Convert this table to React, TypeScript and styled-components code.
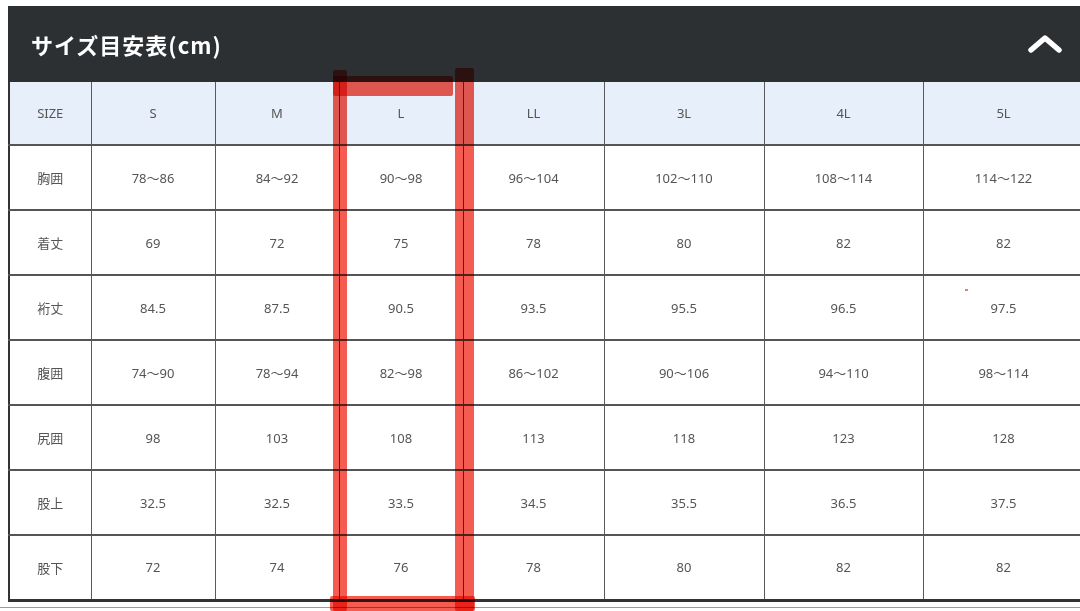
import React from "react";
import styled, { createGlobalStyle } from "styled-components";

const GlobalStyle = createGlobalStyle`
  html, body { margin: 0; padding: 0; background: #fff; }
  body { font-family: "Noto Sans", "Noto Sans CJK JP", sans-serif; }
  #root { width: 1080px; height: 611px; overflow: hidden; }
`;

const Page = styled.div`
  position: relative;
  width: 1080px;
  height: 611px;
  overflow: hidden;
  padding: 6px 0 0 8px;
  box-sizing: border-box;
  isolation: isolate;
`;

const Header = styled.div`
  height: 76px;
  width: 1090px;
  background: #2d3033;
  display: flex;
  align-items: center;
  justify-content: space-between;
  padding: 0 0 0 23px;
  box-sizing: border-box;
`;

const Title = styled.h2`
  margin: 0;
  color: #fff;
  font-family: "Noto Sans CJK JP", "Noto Sans", sans-serif;
  font-weight: 700;
  font-size: 22px;
  letter-spacing: 1px;
`;

const Toggle = styled.div`
  width: 36px;
  height: 24px;
  margin-right: 35px;
  display: flex;
  align-items: center;
  justify-content: center;
`;

const Table = styled.table`
  border-collapse: collapse;
  table-layout: fixed;
  width: 1075px;
  border-left: 2px solid #333;
  border-bottom: 3px solid #333;
`;

const HeadRow = styled.tr`
  height: 63px;
  background: #e7effb;
`;

const BodyRow = styled.tr`
  height: 65px;
  background: #fff;
`;

const Cell = styled.td`
  border-right: 1px solid #5a5a5a;
  border-bottom: 2px solid #555;
  text-align: center;
  vertical-align: middle;
  padding: 0;
  font-family: "Noto Sans", "Noto Sans CJK JP", sans-serif;
  font-size: 13px;
  color: #555;
`;

const BottomRule = styled.div`
  margin: 5px 0 0 -8px;
  width: 1080px;
  height: 1px;
  background: #9a9a9a;
`;

const Annotation = styled.svg`
  position: absolute;
  left: 0;
  top: 0;
  width: 1080px;
  height: 611px;
  pointer-events: none;
  mix-blend-mode: multiply;
  rect {
    mix-blend-mode: multiply;
  }
`;

const widths = [82, 124, 124, 124, 141, 160, 159, 161];
const sizes = ["SIZE", "S", "M", "L", "LL", "3L", "4L", "5L"];
const rows: string[][] = [
  ["胸囲", "78〜86", "84〜92", "90〜98", "96〜104", "102〜110", "108〜114", "114〜122"],
  ["着丈", "69", "72", "75", "78", "80", "82", "82"],
  ["裄丈", "84.5", "87.5", "90.5", "93.5", "95.5", "96.5", "97.5"],
  ["腹囲", "74〜90", "78〜94", "82〜98", "86〜102", "90〜106", "94〜110", "98〜114"],
  ["尻囲", "98", "103", "108", "113", "118", "123", "128"],
  ["股上", "32.5", "32.5", "33.5", "34.5", "35.5", "36.5", "37.5"],
  ["股下", "72", "74", "76", "78", "80", "82", "82"],
];

export default function App() {
  return (
    <>
      <GlobalStyle />
      <Page>
        <Header>
          <Title>サイズ目安表(cm)</Title>
          <Toggle>
            <svg width="36" height="22" viewBox="0 0 36 22">
              <polyline
                points="4,17 18,5 32,17"
                fill="none"
                stroke="#fff"
                strokeWidth="5.5"
                strokeLinecap="round"
                strokeLinejoin="round"
              />
            </svg>
          </Toggle>
        </Header>
        <Table>
          <colgroup>
            {widths.map((w, i) => (
              <col key={i} style={{ width: w }} />
            ))}
          </colgroup>
          <tbody>
            <HeadRow>
              {sizes.map((s) => (
                <Cell key={s}>{s}</Cell>
              ))}
            </HeadRow>
            {rows.map((r) => (
              <BodyRow key={r[0]}>
                {r.map((c, i) => (
                  <Cell key={i}>{c}</Cell>
                ))}
              </BodyRow>
            ))}
          </tbody>
        </Table>
        <BottomRule />
        <Annotation viewBox="0 0 1080 611">
          <g fill="#f45c51">
            <rect x="333" y="70" width="14" height="541" rx="2" />
            <rect x="333" y="76" width="120" height="20" rx="2" />
            <rect x="455" y="68" width="19" height="543" rx="2" />
            <rect x="330" y="596" width="145" height="15" rx="2" />
            <rect x="965" y="289" width="3" height="2" fill="#e08070" />
          </g>
        </Annotation>
      </Page>
    </>
  );
}
